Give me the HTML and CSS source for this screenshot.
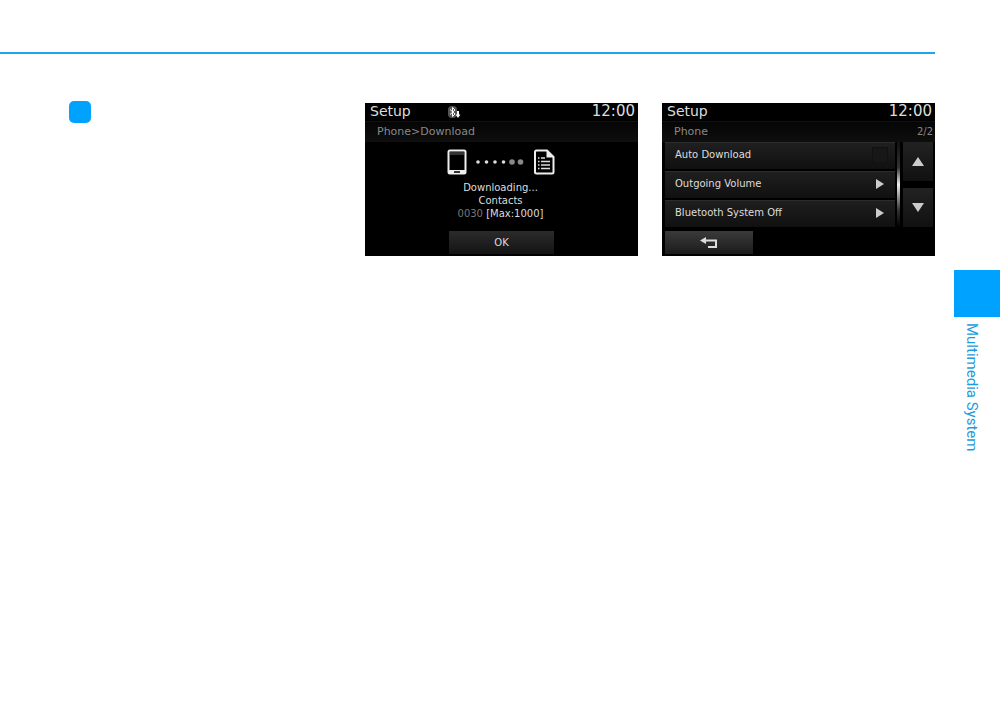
FILE: index.html
```html
<!DOCTYPE html>
<html lang="en">
<head>
    <meta charset="UTF-8">
    <meta name="viewport" content="width=device-width, initial-scale=1.0">
    <title>Multimedia System</title>
    <link rel="stylesheet" href="styles.css">
</head>
<body>
    <div class="page">
        <main class="content">
            <div class="columns">
                <div class="column">
                    <span class="marker"></span>
                </div>

                <section class="screen">
                    <header class="screen-header">
                        <span class="title">Setup</span>
                        <svg class="bt-icon" viewBox="0 0 14 14" width="14" height="14">
                            <rect x="1" y="1" width="9" height="12" rx="4" fill="#555"/>
                            <path d="M3 4.500l5 4.500-2.500 2.500v-9L8 5 3 9.500" fill="none" stroke="#fff" stroke-width="1"/>
                            <path d="M11 6v4" stroke="#fff" stroke-width="2"/>
                            <path d="M8.500 9.500h5L11 13z" fill="#fff"/>
                        </svg>
                        <span class="clock">12:00</span>
                    </header>
                    <div class="path">Phone&gt;Download</div>
                    <div class="download">
                        <div class="transfer">
                            <svg viewBox="0 0 20 26" width="20" height="26">
                                <rect x="1.500" y="1.500" width="17" height="23" rx="1.500" fill="#000" stroke="#eee" stroke-width="2"/>
                                <path d="M3 3h14v3H3z" fill="#333"/>
                                <path d="M2 21h16v3H2z" fill="#eee"/>
                                <path d="M7 22h6v2H7z" fill="#333"/>
                            </svg>
                            <svg viewBox="0 0 48 8" width="48" height="8">
                                <g fill="#ddd">
                                    <circle cx="2" cy="4" r="1.800"/>
                                    <circle cx="10.500" cy="4" r="1.800"/>
                                    <circle cx="19" cy="4" r="1.800"/>
                                    <circle cx="27.500" cy="4" r="1.800"/>
                                </g>
                                <g fill="#888">
                                    <circle cx="36" cy="4" r="2.800"/>
                                    <circle cx="44.500" cy="4" r="2.800"/>
                                </g>
                            </svg>
                            <svg viewBox="0 0 22 26" width="22" height="26">
                                <path d="M3.500 1.500H14l6.500 6.500v15q0 1.500-1.500 1.500H3.500Q2 24.500 2 23V3q0-1.500 1.500-1.500z" fill="#000" stroke="#eee" stroke-width="2"/>
                                <path d="M13.500 1.500V8.500H20.500z" fill="#eee"/>
                                <path d="M8 9h4M8 12.500h9M8 16h9M8 19.500h9" stroke="#ddd" stroke-width="1.500"/>
                                <path d="M5 9h1.500M5 12.500h1.500M5 16h1.500M5 19.500h1.500" stroke="#ddd" stroke-width="1.500"/>
                            </svg>
                        </div>
                        <p>Downloading...</p>
                        <p>Contacts</p>
                        <p><span class="count">0030</span> [Max:1000]</p>
                    </div>
                    <footer class="screen-footer centered">
                        <button type="button" class="key ok">OK</button>
                    </footer>
                </section>

                <section class="screen">
                    <header class="screen-header">
                        <span class="title">Setup</span>
                        <span class="clock">12:00</span>
                    </header>
                    <div class="path"><span>Phone</span><span class="pages">2/2</span></div>
                    <div class="settings">
                        <div class="rows">
                            <label class="row">Auto Download<input type="checkbox" class="check"></label>
                            <button type="button" class="row">Outgoing Volume
                                <svg viewBox="0 0 8 10" width="8" height="10"><path d="M0 0l8 5-8 5z" fill="#ccc"/></svg>
                            </button>
                            <button type="button" class="row">Bluetooth System Off
                                <svg viewBox="0 0 8 10" width="8" height="10"><path d="M0 0l8 5-8 5z" fill="#ccc"/></svg>
                            </button>
                        </div>
                        <div class="scrollbar"></div>
                        <div class="arrows">
                            <button type="button" class="arrow" aria-label="Up">
                                <svg viewBox="0 0 12 10" width="12" height="10"><path d="M6 0l6 9H0z" fill="#ccc"/></svg>
                            </button>
                            <button type="button" class="arrow" aria-label="Down">
                                <svg viewBox="0 0 12 10" width="12" height="10"><path d="M6 9l6-9H0z" fill="#ccc"/></svg>
                            </button>
                        </div>
                    </div>
                    <footer class="screen-footer">
                        <button type="button" class="key back" aria-label="Back">
                            <svg viewBox="0 0 18 12" width="18" height="12">
                                <path d="M5 3.500h11v6.500H8" fill="none" stroke="#ddd" stroke-width="2"/>
                                <path d="M0 3.500L6 0v7z" fill="#ddd"/>
                            </svg>
                        </button>
                    </footer>
                </section>
            </div>
        </main>

        <aside class="side">
            <div class="tab"></div>
            <span class="chapter">Multimedia System</span>
        </aside>
    </div>
</body>
</html>
```

FILE: styles.css
```css
* {
    box-sizing: border-box;
}
body {
    margin: 0;
    background: #fff;
    font-family: "DejaVu Sans", sans-serif;
}
.page {
    display: flex;
    padding-top: 52px;
}
.content {
    flex: 1;
    border-top: 2px solid #1ba5ea;
}
.columns {
    display: grid;
    grid-template-columns: repeat(3, 1fr);
    gap: 24px;
    padding: 49px 0 0 68px;
}
.marker {
    display: block;
    width: 22px;
    height: 22px;
    margin: -2px 1px;
    border-radius: 5px;
    background: #00a2ff;
}

/* head unit screens */
.screen {
    display: flex;
    flex-direction: column;
    background: #000;
    color: #ddd;
    font-size: 10px;
}
.screen-header {
    display: flex;
    align-items: center;
    height: 18px;
    padding: 0 3px 2px 5px;
    line-height: 16px;
}
.title {
    font-size: 14px;
}
.bt-icon {
    margin: 2px 0 0 36px;
}
.clock {
    margin-left: auto;
    font-size: 15px;
}
.path {
    display: flex;
    justify-content: space-between;
    height: 21px;
    padding: 0 2px 0 12px;
    border-top: 1px solid #111;
    background: linear-gradient(#050505, #0e0e0e);
    color: #888;
    font-size: 11px;
    line-height: 19px;
}
.pages {
    font-size: 10px;
}
.download {
    flex: 1;
    padding-right: 2px;
    text-align: center;
    line-height: 13px;
}
.download p {
    margin: 0;
}
.transfer {
    display: flex;
    justify-content: center;
    align-items: center;
    gap: 9px;
    height: 39px;
    padding-top: 1px;
}
.count {
    color: #777;
}
.screen-footer {
    display: flex;
    padding: 4px 3px 2px;
}
.centered {
    justify-content: center;
}
.key {
    display: flex;
    justify-content: center;
    align-items: center;
    height: 23px;
    padding: 0;
    border: 0;
    background: linear-gradient(#2b2b2b, #141414);
    color: #ddd;
    font: inherit;
}
.ok {
    width: 105px;
}
.back {
    width: 88px;
    background: linear-gradient(#3a3a3a, #1c1c1c);
}
.settings {
    display: flex;
    gap: 2px;
    padding: 0 2px 0 3px;
}
.rows {
    flex: 1;
    display: flex;
    flex-direction: column;
    gap: 2px;
}
.row {
    display: flex;
    justify-content: space-between;
    align-items: center;
    height: 27px;
    padding: 0 11px 3px 10px;
    border: 0;
    border-top: 1px solid #2c2c2c;
    background: linear-gradient(#1f1f1f, #101010);
    color: #ddd;
    font: inherit;
    text-align: left;
}
.check {
    appearance: none;
    width: 16px;
    height: 16px;
    margin: 0 -4px;
    border: 1px solid #111;
    background: #171717;
}
.scrollbar {
    width: 3px;
    background: linear-gradient(#111, #333 30%, #eee 50%, #333 80%, #000);
}
.arrows {
    display: flex;
    flex-direction: column;
    justify-content: space-between;
    width: 30px;
    margin-left: 1px;
}
.arrow {
    display: flex;
    justify-content: center;
    align-items: center;
    height: 39px;
    padding: 0;
    border: 0;
    background: linear-gradient(#222, #111);
}

/* chapter tab on the page edge */
.side {
    width: 65px;
    padding: 218px 0 0 19px;
}
.tab {
    height: 47px;
    background: #00a2ff;
}
.chapter {
    display: block;
    margin: 6px 0 0 8px;
    color: #1b9be0;
    font-family: Roboto, sans-serif;
    font-size: 15px;
    line-height: 20px;
    writing-mode: vertical-rl;
}
```
